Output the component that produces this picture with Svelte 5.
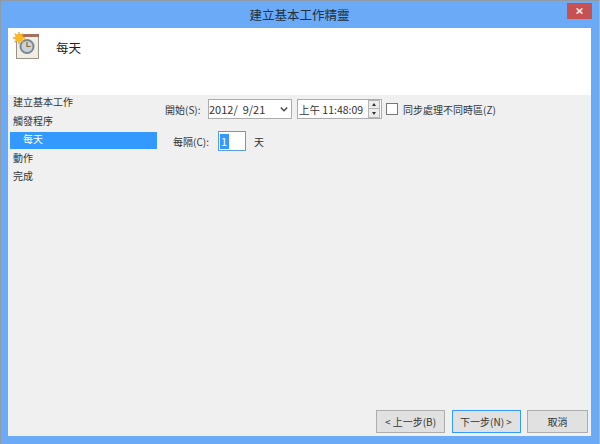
<script>
	const steps = [
		{ label: '建立基本工作' },
		{ label: '觸發程序' },
		{ label: '每天', active: true },
		{ label: '動作' },
		{ label: '完成' },
	];
</script>

<div class="window">
	<div class="titlebar">
		<span class="title">建立基本工作精靈</span>
		<button class="close" aria-label="關閉">
			<svg width="7" height="6" viewBox="0 0 7 6">
				<path d="M0.6 0.4 L6.4 5.6 M6.4 0.4 L0.6 5.6" stroke="#f6e6e6" stroke-width="1.7" fill="none" />
			</svg>
		</button>
	</div>

	<div class="client">
		<header class="banner">
			<svg class="banner_icon" width="29" height="29" viewBox="0 0 29 29">
				<rect x="4.5" y="3.5" width="22" height="23" fill="#f1ede4" stroke="#9a9488" />
				<rect x="5" y="2" width="22" height="3" fill="#a5705f" />
				<circle cx="15" cy="14.5" r="6.5" fill="#c9d2da" stroke="#7d8790" stroke-width="2" />
				<path d="M15 10 V14.5 H18.5" stroke="#8a6a2c" stroke-width="1.2" fill="none" />
				<path d="M7 0 V12 M1 6 H13 M2.8 1.8 L11.2 10.2 M11.2 1.8 L2.8 10.2" stroke="#f7a416" stroke-width="1.3" />
				<circle cx="7" cy="6" r="4" fill="#fbb81f" />
			</svg>
			<h1 class="banner_title">每天</h1>
		</header>

		<div class="body">
			<nav class="steps">
				{#each steps as step}
					<div class="step" class:step--active={step.active}>{step.label}</div>
				{/each}
			</nav>

			<main class="form">
				<div class="row_start">
					<label class="label" for="start">開始(S):</label>
					<div class="field date" id="start">
						<span>2012/&nbsp;&nbsp;9/21</span>
						<svg width="8" height="5" viewBox="0 0 8 5">
							<path d="M0.8 0.6 L4 3.8 L7.2 0.6" stroke="#444" stroke-width="1.4" fill="none" />
						</svg>
					</div>
					<div class="field time">
						<span>上午 11:48:09</span>
						<div class="spin">
							<div class="spin_btn"><i class="arrow_up"></i></div>
							<div class="spin_btn"><i class="arrow_down"></i></div>
						</div>
					</div>
					<div class="checkbox"></div>
					<span class="check_label">同步處理不同時區(Z)</span>
				</div>

				<div class="row_every">
					<label class="label" for="every">每隔(C):</label>
					<div class="every_input" id="every"><span class="selected">1</span></div>
					<span class="unit">天</span>
				</div>
			</main>
		</div>

		<footer class="footer">
			<button class="btn">&lt; 上一步(B)</button>
			<button class="btn btn--default">下一步(N) &gt;</button>
			<button class="btn btn--cancel">取消</button>
		</footer>
	</div>
</div>

<style>
	:global(body) {
		margin: 0;
	}

	.window {
		box-sizing: border-box;
		display: flex;
		flex-direction: column;
		width: 600px;
		height: 444px;
		padding: 0 8px 8px 7px;
		background: #6aaaf6;
		border: 1px solid #8f9aa6;
		border-bottom: 0;
		border-right-color: #a9b4bf;
		font-family: "Noto Sans CJK TC", "Liberation Sans", sans-serif;
		font-size: 10px;
		color: #333;
	}

	.titlebar {
		position: relative;
		display: flex;
		flex: none;
		justify-content: center;
		height: 27px;
		line-height: 27px;
	}

	.title {
		font-size: 12.5px;
		color: #22303c;
	}

	.close {
		position: absolute;
		top: 2px;
		right: -1px;
		display: flex;
		align-items: center;
		justify-content: center;
		width: 25px;
		height: 16px;
		padding: 0;
		border: 0;
		background: #c75050;
	}

	.client {
		display: flex;
		flex: 1;
		flex-direction: column;
		background: #f0f0f0;
		min-height: 0;
	}

	.banner {
		display: flex;
		flex: none;
		align-items: flex-start;
		height: 67px;
		padding: 4px 0 0 4px;
		box-sizing: border-box;
		background: #fff;
	}

	.banner_title {
		margin: 8px 0 0 15px;
		font-size: 12.5px;
		font-weight: 400;
		line-height: 16px;
		color: #222;
	}

	.body {
		display: flex;
		flex: 1;
		min-height: 0;
	}

	.steps {
		flex: none;
		width: 148px;
		padding: 0 0 0 2px;
	}

	.step {
		height: 18.5px;
		padding-left: 3px;
		line-height: 14px;
	}

	.step--active {
		width: 147px;
		height: 17px;
		margin-bottom: 1.5px;
		padding-left: 13px;
		box-sizing: border-box;
		line-height: 14px;
		background: #3399ff;
		color: #fff;
	}

	.form {
		flex: 1;
		padding: 4px 0 0 7px;
	}

	.row_start {
		display: flex;
		align-items: center;
		height: 20px;
	}

	.label {
		width: 43px;
		flex: none;
		white-space: nowrap;
	}

	.field {
		display: flex;
		align-items: center;
		box-sizing: border-box;
		height: 20px;
		background: #fff;
		border: 1px solid #acacac;
		font-size: 11px;
	}

	.date {
		justify-content: space-between;
		width: 84px;
		padding: 0 3px 0 0;
		margin-right: 5px;
	}

	.time {
		justify-content: space-between;
		width: 85px;
		padding-left: 1px;
		font-size: 10.5px;
		white-space: nowrap;
	}

	.spin {
		display: flex;
		flex-direction: column;
		flex: none;
		padding-right: 1px;
	}

	.spin_btn {
		display: flex;
		align-items: center;
		justify-content: center;
		box-sizing: border-box;
		width: 12px;
		height: 9px;
		background: #ededed;
		border: 1px solid #b5b5b5;
	}

	.spin_btn + .spin_btn {
		border-top: 0;
	}

	.arrow_up,
	.arrow_down {
		width: 0;
		height: 0;
		border-left: 2.5px solid transparent;
		border-right: 2.5px solid transparent;
	}

	.arrow_up {
		border-bottom: 3px solid #333;
	}

	.arrow_down {
		border-top: 3px solid #333;
	}

	.checkbox {
		box-sizing: border-box;
		flex: none;
		width: 12px;
		height: 12px;
		margin-left: 4px;
		background: #fff;
		border: 1px solid #777;
	}

	.check_label {
		margin-left: 5px;
		white-space: nowrap;
	}

	.row_every {
		display: flex;
		align-items: center;
		height: 20px;
		margin-top: 12px;
		padding-left: 8px;
	}

	.row_every .label {
		width: 45px;
	}

	.every_input {
		display: flex;
		align-items: center;
		box-sizing: border-box;
		width: 28px;
		height: 20px;
		padding-left: 1px;
		background: #fff;
		border: 1px solid #569de5;
		font-size: 11px;
	}

	.selected {
		background: #3399ff;
		color: #fff;
		line-height: 15px;
		padding: 0 2px 0 1px;
	}

	.unit {
		margin-left: 8px;
	}

	.footer {
		display: flex;
		flex: none;
		justify-content: flex-end;
		gap: 6.5px;
		padding: 0 3px 3px 0;
	}

	.btn {
		box-sizing: border-box;
		width: 69px;
		height: 23px;
		padding: 0;
		background: #e1e1e1;
		border: 1px solid #adadad;
		font: inherit;
		color: #333;
	}

	.btn--default {
		border: 1px solid #3399ff;
	}

	.btn--cancel {
		width: 61px;
	}
</style>
